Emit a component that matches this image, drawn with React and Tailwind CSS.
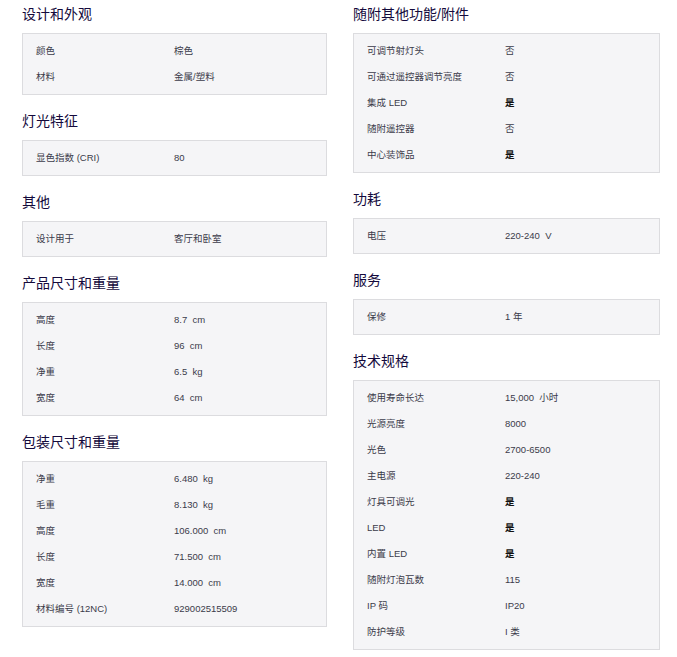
const L = [
  ["设计和外观", [["颜色","棕色"],["材料","金属/塑料"]]],
  ["灯光特征", [["显色指数 (CRI)","80"]]],
  ["其他", [["设计用于","客厅和卧室"]]],
  ["产品尺寸和重量", [["高度","8.7  cm"],["长度","96  cm"],["净重","6.5  kg"],["宽度","64  cm"]]],
  ["包装尺寸和重量", [["净重","6.480  kg"],["毛重","8.130  kg"],["高度","106.000  cm"],["长度","71.500  cm"],["宽度","14.000  cm"],["材料编号 (12NC)","929002515509"]]],
];
const R = [
  ["随附其他功能/附件", [["可调节射灯头","否"],["可通过遥控器调节亮度","否"],["集成 LED","是"],["随附遥控器","否"],["中心装饰品","是"]]],
  ["功耗", [["电压","220-240  V"]]],
  ["服务", [["保修","1 年"]]],
  ["技术规格", [["使用寿命长达","15,000  小时"],["光源亮度","8000"],["光色","2700-6500"],["主电源","220-240"],["灯具可调光","是"],["LED","是"],["内置 LED","是"],["随附灯泡瓦数","115"],["IP 码","IP20"],["防护等级","I 类"]]],
];
function Col({ data }) {
  return (
    <div className="flex flex-col gap-[13px]">
      {data.map(([h, rows]) => (
        <div key={h}>
          <div className="h-[26px] leading-[26px] text-[14px] text-[#140a3c] mb-[6px]">{h}</div>
          <div className="bg-[#f5f5f7] border border-[#dcdcdf] py-[4px] px-[13px]">
            {rows.map(([k, v]) => (
              <div key={k} className="flex h-[26px] items-center text-[9.5px] text-[#3b3b4a] whitespace-pre">
                <div className="w-[138px]">{k}</div>
                <div className={v === "是" ? "font-bold text-[#111]" : ""}>{v}</div>
              </div>
            ))}
          </div>
        </div>
      ))}
    </div>
  );
}
export default function App() {
  return (
    <div className="w-[677px] h-[657px] bg-white pl-[22px] pt-[1px] flex gap-[26px]" style={{ fontFamily: '"Liberation Sans","Noto Sans CJK SC",sans-serif' }}>
      <div className="w-[305px]"><Col data={L} /></div>
      <div className="w-[307px]"><Col data={R} /></div>
    </div>
  );
}
